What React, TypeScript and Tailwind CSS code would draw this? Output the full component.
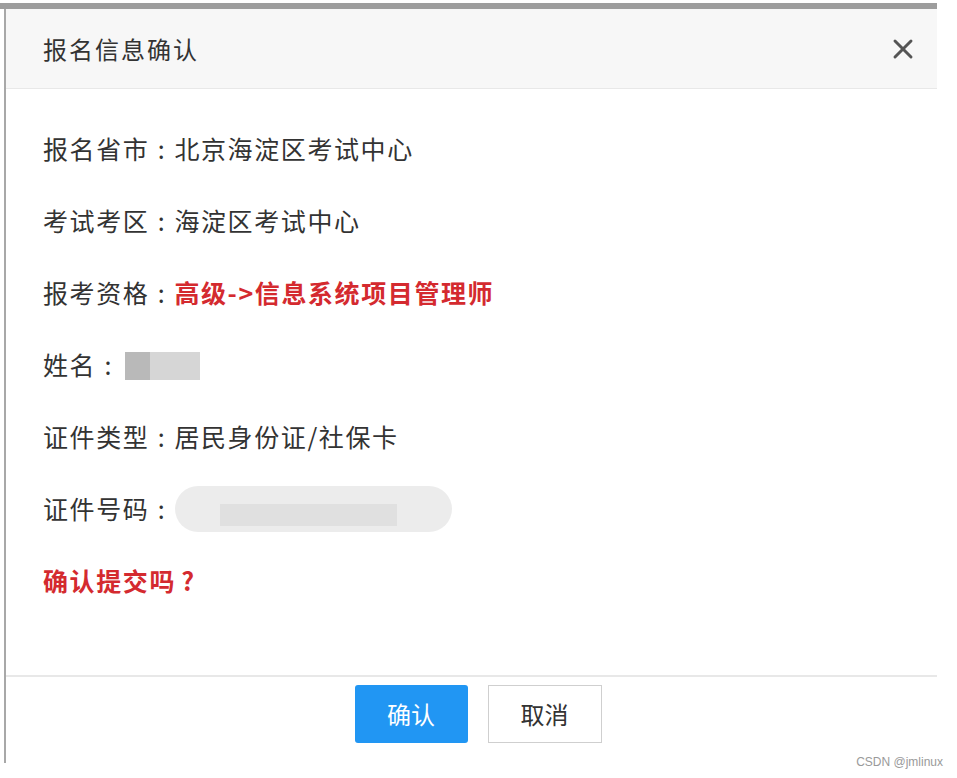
import { X } from "lucide-react";

const font = { fontFamily: '"Noto Sans CJK SC", "Liberation Sans", sans-serif' };

function Colon() {
  return <span className="inline-block w-[1em] text-center">:</span>;
}

export default function App() {
  const rows = [
    { label: "报名省市", value: "北京海淀区考试中心" },
    { label: "考试考区", value: "海淀区考试中心" },
  ];

  return (
    <div className="relative w-[957px] h-[778px] bg-white overflow-hidden" style={font}>
      <div className="mt-[3px] w-[937px] h-[6px] bg-[#9d9d9d]" />

      <div className="ml-[4px] w-[933px] border-l-2 border-[#a8a8a8] pb-[20px]">
        {/* header */}
        <div className="h-[80px] bg-[#f7f7f7] border-b border-[#e8e8e8] flex items-center justify-between pl-[37px] pr-[18px]">
          <span className="text-[24px] text-[#333] tracking-[2px]">报名信息确认</span>
          <X size={32} strokeWidth={2.2} className="text-[#555]" />
        </div>

        {/* body */}
        <div className="pl-[37px] pt-[24px] pb-[58px] text-[25px] text-[#333] tracking-[1.6px]">
          {rows.map((r) => (
            <div key={r.label} className="h-[72px] flex items-center">
              {r.label}
              <Colon />
              {r.value}
            </div>
          ))}

          <div className="h-[72px] flex items-center">
            报考资格
            <Colon />
            <span className="text-[#d42a2f] font-bold">高级-&gt;信息系统项目管理师</span>
          </div>

          <div className="h-[72px] flex items-center">
            姓名
            <Colon />
            <div className="flex h-[28px] mt-[2px] ml-[4px]">
              <div className="w-[25px] bg-[#b9b9b9]" />
              <div className="w-[50px] bg-[#d6d6d6]" />
            </div>
          </div>

          <div className="h-[72px] flex items-center">
            证件类型
            <Colon />
            居民身份证/社保卡
          </div>

          <div className="h-[72px] flex items-center">
            证件号码
            <Colon />
            <div className="relative w-[277px] h-[46px] ml-[1px] rounded-full bg-[#ececec] overflow-hidden">
              <div className="absolute left-[45px] right-[55px] bottom-[6px] h-[22px] bg-[#e0e0e0]" />
            </div>
          </div>

          <div className="h-[72px] flex items-center text-[#d42a2f] font-bold">
            确认提交吗
            <span className="inline-block w-[1em] text-center">?</span>
          </div>
        </div>

        {/* footer */}
        <div className="border-t-2 border-[#e8e8e8] pt-[8px] flex justify-center gap-[20px] pl-[13px]">
          <button className="w-[113px] h-[58px] rounded-[3px] bg-[#2196f3] text-white text-[24px]">确认</button>
          <button className="w-[114px] h-[58px] border border-[#cfcfcf] bg-white text-[#333] text-[24px]">取消</button>
        </div>
      </div>

      <span
        className="absolute right-[14px] top-[753px] text-[12px] text-[#9a9a9a]"
        style={{ fontFamily: '"Liberation Sans", sans-serif' }}
      >
        CSDN @jmlinux
      </span>
    </div>
  );
}
